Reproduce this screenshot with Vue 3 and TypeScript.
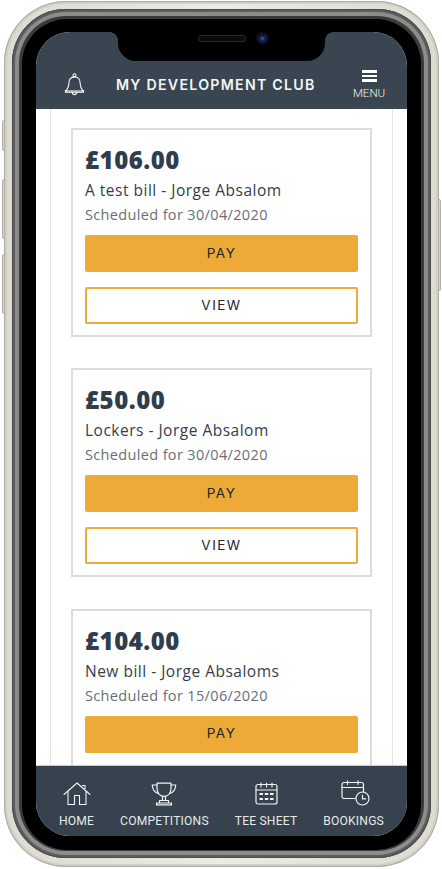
<script setup lang="ts">
interface Bill { amount: string; title: string; date: string; view: boolean }
const bills: Bill[] = [
  { amount: '£106.00', title: 'A test bill - Jorge Absalom', date: 'Scheduled for 30/04/2020', view: true },
  { amount: '£50.00', title: 'Lockers - Jorge Absalom', date: 'Scheduled for 30/04/2020', view: true },
  { amount: '£104.00', title: 'New bill - Jorge Absaloms', date: 'Scheduled for 15/06/2020', view: false },
]
</script>

<template>
  <div class="stage">
    <div class="device">
      <span class="side-btn mute"></span>
      <span class="side-btn vol-up"></span>
      <span class="side-btn vol-down"></span>
      <span class="side-btn power"></span>
      <div class="ring">
        <div class="bezel">
          <div class="screen">
            <div class="notch">
              <span class="speaker"></span>
              <span class="camera"></span>
            </div>
            <header class="top">
              <svg class="bell" viewBox="0 0 22 24" fill="none" stroke="#fff" stroke-width="1.100" stroke-linejoin="round" stroke-linecap="round">
                <circle cx="11" cy="2.400" r="1.600" />
                <path d="M11 4c-3.800 0-5.900 2.700-5.900 6.300 0 4.600-1.400 6.500-3.600 8.500h19c-2.200-2-3.600-3.900-3.600-8.500C16.900 6.700 14.800 4 11 4z" />
                <path d="M1.500 18.800v1.400h19v-1.400M8.500 20.300c.2 1.500 1.200 2.300 2.500 2.300s2.300-.8 2.500-2.300" />
              </svg>
              <h1 class="club">MY DEVELOPMENT CLUB</h1>
              <div class="menu">
                <span class="burger"><i></i><i></i><i></i></span>
                <span class="menu-label">MENU</span>
              </div>
            </header>
            <main class="content">
              <div class="rail">
                <article v-for="b in bills" :key="b.amount" class="card">
                  <div class="amount">{{ b.amount }}</div>
                  <div class="title">{{ b.title }}</div>
                  <div class="date">{{ b.date }}</div>
                  <button class="btn pay">PAY</button>
                  <button v-if="b.view" class="btn view">VIEW</button>
                </article>
              </div>
            </main>
            <nav class="tabs">
              <div class="tab">
                <svg width="28" height="24" viewBox="0 0 28 24" fill="none" stroke="#f2f4f5" stroke-width="1.100" stroke-linejoin="round" stroke-linecap="round">
                  <path d="M1 12.500 14 1l13 11.500" />
                  <path d="M5 9.500V22.500h6.500v-9h5v9H23V9.500" />
                  <path d="M19.500 3.500h2.500v3" />
                </svg>
                <span>HOME</span>
              </div>
              <div class="tab">
                <svg width="26" height="24" viewBox="0 0 26 24" fill="none" stroke="#f2f4f5" stroke-width="1.200" stroke-linejoin="round" stroke-linecap="round">
                  <path d="M6 1.200h14v4.800c0 5-2.800 8.300-7 8.300S6 11 6 6z" />
                  <path d="M6 3H1.200c.3 4.600 2.400 7.500 6.300 8.500M20 3h4.800c-.3 4.600-2.400 7.500-6.300 8.500" />
                  <path d="M11.500 14.300v4.200M14.500 14.300v4.200M8.500 18.500h9v2.500h-9zM5.500 21h15v1.800h-15z" />
                </svg>
                <span>COMPETITIONS</span>
              </div>
              <div class="tab">
                <svg width="23" height="24" viewBox="0 0 23 24" fill="none" stroke="#f2f4f5" stroke-width="1.200" stroke-linejoin="round" stroke-linecap="round">
                  <rect x="1" y="2.500" width="21" height="19.500" rx="2" />
                  <path d="M1 8h21M6 1v4M11.500 1v4M17 1v4" />
                  <path stroke-width="2.200" stroke-linecap="butt" d="M4.500 12h3.500M9.800 12h3.500M15 12h3.500M4.500 17h3.500M9.800 17h3.500M15 17h3.500" />
                </svg>
                <span>TEE SHEET</span>
              </div>
              <div class="tab">
                <svg width="29" height="26" viewBox="0 0 29 26" fill="none" stroke="#f2f4f5" stroke-width="1.200" stroke-linejoin="round" stroke-linecap="round" class="book-icon">
                  <path d="M14 18.500H3a2 2 0 0 1-2-2V4.500a2 2 0 0 1 2-2h17.500a2 2 0 0 1 2 2V12" />
                  <path d="M1 7.500h21.500M6.500 .8v3.500M17 .8v3.500" />
                  <circle cx="21.500" cy="18.500" r="6.500" />
                  <path d="M21.500 15v3.800h3.200" />
                </svg>
                <span>BOOKINGS</span>
              </div>
            </nav>
          </div>
        </div>
      </div>
    </div>
  </div>
</template>

<style scoped>
.stage {
  width: 442px;
  height: 869px;
  padding: 1px 3px 2px 4px;
  box-sizing: border-box;
  background: #fff;
  overflow: hidden;
}
.device {
  position: relative;
  height: 866px;
  box-sizing: border-box;
  padding: 8px 8px 9px;
  border-radius: 62px;
  background: linear-gradient(90deg, #dcdad1, #ecebe4 50%, #dcdad1);
  box-shadow: inset 0 0 0 1px #aeaca1, inset 0 0 0 3px #d2d0c6;
}
.side-btn {
  position: absolute;
  width: 3px;
  background: #d6d4ca;
  border: 1px solid #b3b0a5;
  box-sizing: border-box;
}
.mute { left: -2px; top: 119px; height: 31px; border-radius: 2px 0 0 2px; }
.vol-up { left: -2px; top: 178px; height: 60px; border-radius: 2px 0 0 2px; }
.vol-down { left: -2px; top: 253px; height: 60px; border-radius: 2px 0 0 2px; }
.power { right: -2px; top: 198px; height: 92px; border-radius: 0 2px 2px 0; }
.ring {
  height: 100%;
  box-sizing: border-box;
  padding: 10px 10px 8px;
  border-radius: 54px;
  background: #3a3a3a;
  box-shadow: inset 0 0 0 1px #4d4d4d, inset 0 0 0 3px #5d5d5d, inset 0 0 0 7px #8c8c8a;
}
.bezel {
  height: 100%;
  box-sizing: border-box;
  padding: 13px 14px 14px;
  border-radius: 45px;
  background: #000;
}
.screen {
  position: relative;
  height: 100%;
  display: flex;
  flex-direction: column;
  overflow: hidden;
  border-radius: 34px;
  background: #fff;
}
.notch {
  position: absolute;
  left: 82px;
  top: 0;
  width: 207px;
  height: 29px;
  background: #000;
  border-radius: 0 0 18px 18px;
  z-index: 2;
}
.notch::before,
.notch::after {
  content: '';
  position: absolute;
  top: 0;
  width: 8px;
  height: 8px;
  background: radial-gradient(circle at 0 100%, transparent 7.500px, #000 8px);
}
.notch::before { left: -8px; }
.notch::after {
  right: -8px;
  background: radial-gradient(circle at 100% 100%, transparent 7.500px, #000 8px);
}
.speaker {
  position: absolute;
  left: 81px;
  top: 4px;
  width: 46px;
  height: 5px;
  border-radius: 3px;
  background: #0a0a0c;
  box-shadow: 0 0 0 1px #2a2a2c;
}
.camera {
  position: absolute;
  left: 138px;
  top: 0;
  width: 13px;
  height: 13px;
  border-radius: 50%;
  background: radial-gradient(circle, #3a62b0 0, #1a2a5a 22%, #0c0f20 50%, #0b0c12 100%);
}
.top {
  flex: none;
  height: 77px;
  box-sizing: border-box;
  padding: 38px 22px 0 0;
  background: #394651;
  display: flex;
  align-items: flex-start;
  position: relative;
}
.bell {
  width: 21px;
  height: 23px;
  margin: 3px 0 0 28px;
}
.club {
  margin: 5px 0 0 31px;
  font: 600 14.200px/20px 'Inter', sans-serif;
  letter-spacing: 1.250px;
  color: #f5f6f7;
  white-space: nowrap;
}
.menu {
  margin-left: auto;
  display: flex;
  flex-direction: column;
  align-items: center;
  width: 32px;
}
.burger {
  display: flex;
  flex-direction: column;
  gap: 2px;
  width: 15px;
}
.burger i {
  display: block;
  height: 2.500px;
  background: #fff;
}
.menu-label {
  margin-top: 5px;
  font: 300 11.500px/13px 'Roboto', sans-serif;
  color: #f1f3f4;
}
.content {
  flex: 1;
  min-height: 0;
  overflow: hidden;
  padding: 0 14px;
}
.rail {
  height: 100%;
  box-sizing: border-box;
  padding: 19px 20px 0;
  border-left: 1px solid #e4e4e4;
  border-right: 1px solid #e4e4e4;
  display: flex;
  flex-direction: column;
  gap: 31.300px;
}
.card {
  flex: none;
  height: 209px;
  box-sizing: border-box;
  padding: 16px 12px 0;
  border: 2px solid #dcdcdc;
  background: #fff;
}
.amount {
  font: 800 24px/28px 'Open Sans', sans-serif;
  letter-spacing: .5px;
  color: #303e4c;
}
.title {
  margin-top: 6px;
  font: 400 15.500px/20px 'Open Sans', sans-serif;
  letter-spacing: .5px;
  color: #323e4b;
}
.date {
  margin-top: 5px;
  font: 400 14.500px/20px 'Open Sans', sans-serif;
  letter-spacing: .35px;
  color: #676f77;
}
.btn {
  display: block;
  width: 100%;
  height: 37px;
  box-sizing: border-box;
  border-radius: 2px;
  font: 400 13.500px/1 'Inter', sans-serif;
  letter-spacing: 1.500px;
  color: #22262b;
  padding: 0;
}
.pay {
  margin-top: 10px;
  border: none;
  background: #edaa38;
}
.view {
  margin-top: 15px;
  background: #fff;
  border: 2px solid #edaa38;
}
.tabs {
  flex: none;
  height: 71px;
  box-sizing: border-box;
  padding: 0 23px;
  background: #36424e;
  border-top: 1px solid #c9ccce;
  position: relative;
  display: flex;
  justify-content: space-between;
  z-index: 1;
}
.tab {
  display: flex;
  flex-direction: column;
  align-items: center;
  padding-top: 16px;
  font: 400 12.100px/14px 'Roboto', sans-serif;
  letter-spacing: .2px;
  color: #e6e9eb;
  white-space: nowrap;
}
.tab svg {
  height: 24px;
  margin-bottom: 8px;
  display: block;
}
.tab .book-icon {
  height: 26px;
  margin-top: -2px;
  margin-bottom: 8px;
  margin-left: 3px;
}
</style>
